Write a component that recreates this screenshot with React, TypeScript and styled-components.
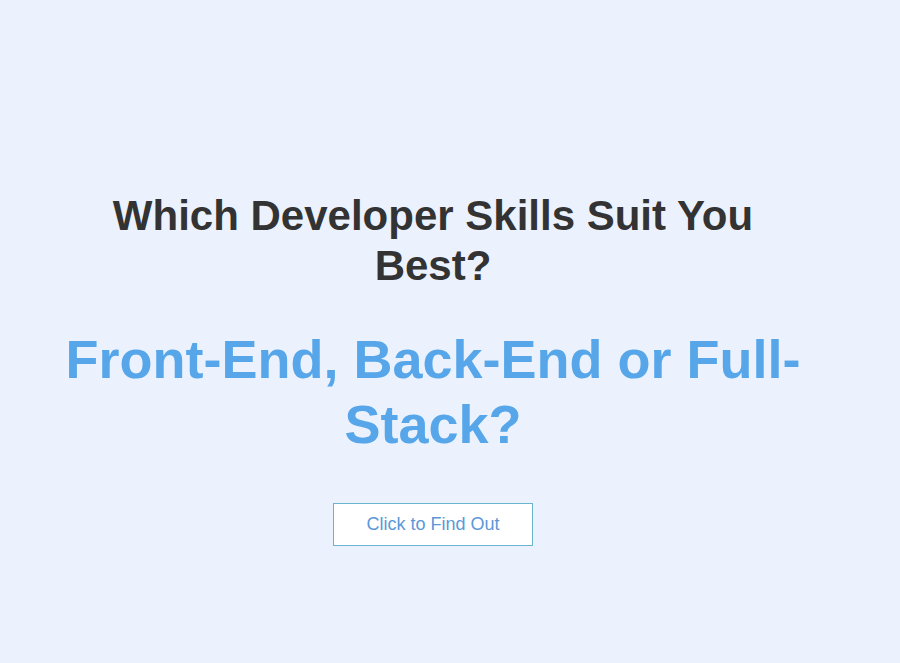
import React from "react";
import styled, { createGlobalStyle } from "styled-components";

const Global = createGlobalStyle`
  html, body { margin: 0; padding: 0; background: #ebf2fe; }
  body { font-family: "Liberation Sans", Arial, sans-serif; }
`;

const Page = styled.main`
  min-height: 663px;
  box-sizing: border-box;
  padding: 191px 34px 0 0;
  display: flex;
  flex-direction: column;
  align-items: center;
`;

const Content = styled.section`
  width: 750px;
  display: flex;
  flex-direction: column;
  align-items: center;
  text-align: center;
`;

const Title = styled.h1`
  margin: 0;
  font-size: 42px;
  line-height: 50px;
  font-weight: 700;
  color: #333333;
`;

const Subtitle = styled.h2`
  margin: 36px 0 0;
  font-size: 54px;
  line-height: 65px;
  font-weight: 700;
  color: #56a6e9;
`;

const Button = styled.button`
  margin-top: 46px;
  width: 200px;
  height: 43px;
  background: #ffffff;
  border: 1px solid #6ab4cf;
  border-radius: 0;
  font-family: "Liberation Sans", Arial, sans-serif;
  font-size: 18px;
  color: #5b98d8;
  cursor: pointer;
`;

export default function App() {
  return (
    <>
      <Global />
      <Page>
        <Content>
          <Title>Which Developer Skills Suit You Best?</Title>
          <Subtitle>Front-End, Back-End or Full-Stack?</Subtitle>
          <Button>Click to Find Out</Button>
        </Content>
      </Page>
    </>
  );
}
